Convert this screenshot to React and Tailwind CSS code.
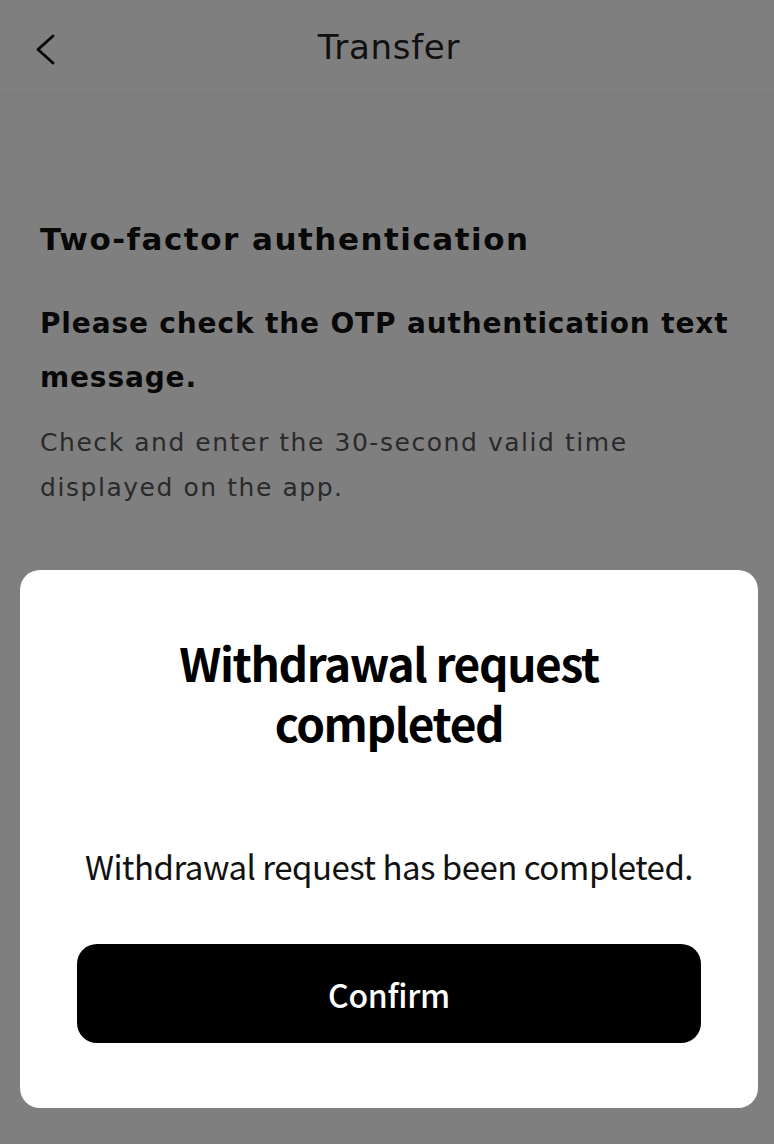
const App = () => {
    return (
        <div className="relative min-h-[1144px] bg-white" style={{ fontFamily: '"DejaVu Sans", "Noto Sans", sans-serif' }}>
            <header className="relative flex h-[95px] items-center justify-center border-b border-[#f2f2f2] bg-[#fefefe]">
                <button className="absolute left-[33px] top-[32px] text-[#111]">
                    <svg width="24" height="34" viewBox="0 0 24 34" fill="none" stroke="currentColor" strokeWidth="3" strokeLinecap="round" strokeLinejoin="round">
                        <path d="M20 4 L5 17.5 L20 31" />
                    </svg>
                </button>
                <h1 className="pl-[4px] text-[34px] tracking-[0.7px] text-[#222]">Transfer</h1>
            </header>

            <div className="pl-[40px] pr-[34px] pt-[124px]">
                <h2 className="text-[31px] font-bold leading-[40px] tracking-[1.5px] text-[#111]">Two-factor authentication</h2>
                <p className="mt-[38px] text-[28px] font-bold leading-[54px] tracking-[0.85px] text-[#111]">
                    Please check the OTP authentication text message.
                </p>
                <p className="mt-[15px] text-[25px] leading-[45px] tracking-[1.55px] text-[#555]">
                    Check and enter the 30-second valid time displayed on the app.
                </p>
            </div>

            <div className="fixed inset-0 flex items-end bg-black/50 pb-[36px] pl-[20px]">
                <div className="w-[738px] rounded-[20px] bg-white px-[57px] pb-[65px] pt-[62px] text-center" style={{ fontFamily: '"Noto Sans CJK KR", "Noto Sans", sans-serif' }}>
                    <h3 className="mx-auto w-[480px] text-[46px] font-bold leading-[60px] tracking-[-1.4px] text-black">
                        Withdrawal request completed
                    </h3>
                    <p className="mt-[92px] text-[33px] leading-[44px] tracking-[-0.5px] text-[#111]">
                        Withdrawal request has been completed.
                    </p>
                    <button className="mt-[56px] flex h-[99px] w-full items-center justify-center rounded-[20px] bg-black text-[32px] font-medium tracking-[-0.3px] text-white">
                        Confirm
                    </button>
                </div>
            </div>
        </div>
    );
};

export default App;
